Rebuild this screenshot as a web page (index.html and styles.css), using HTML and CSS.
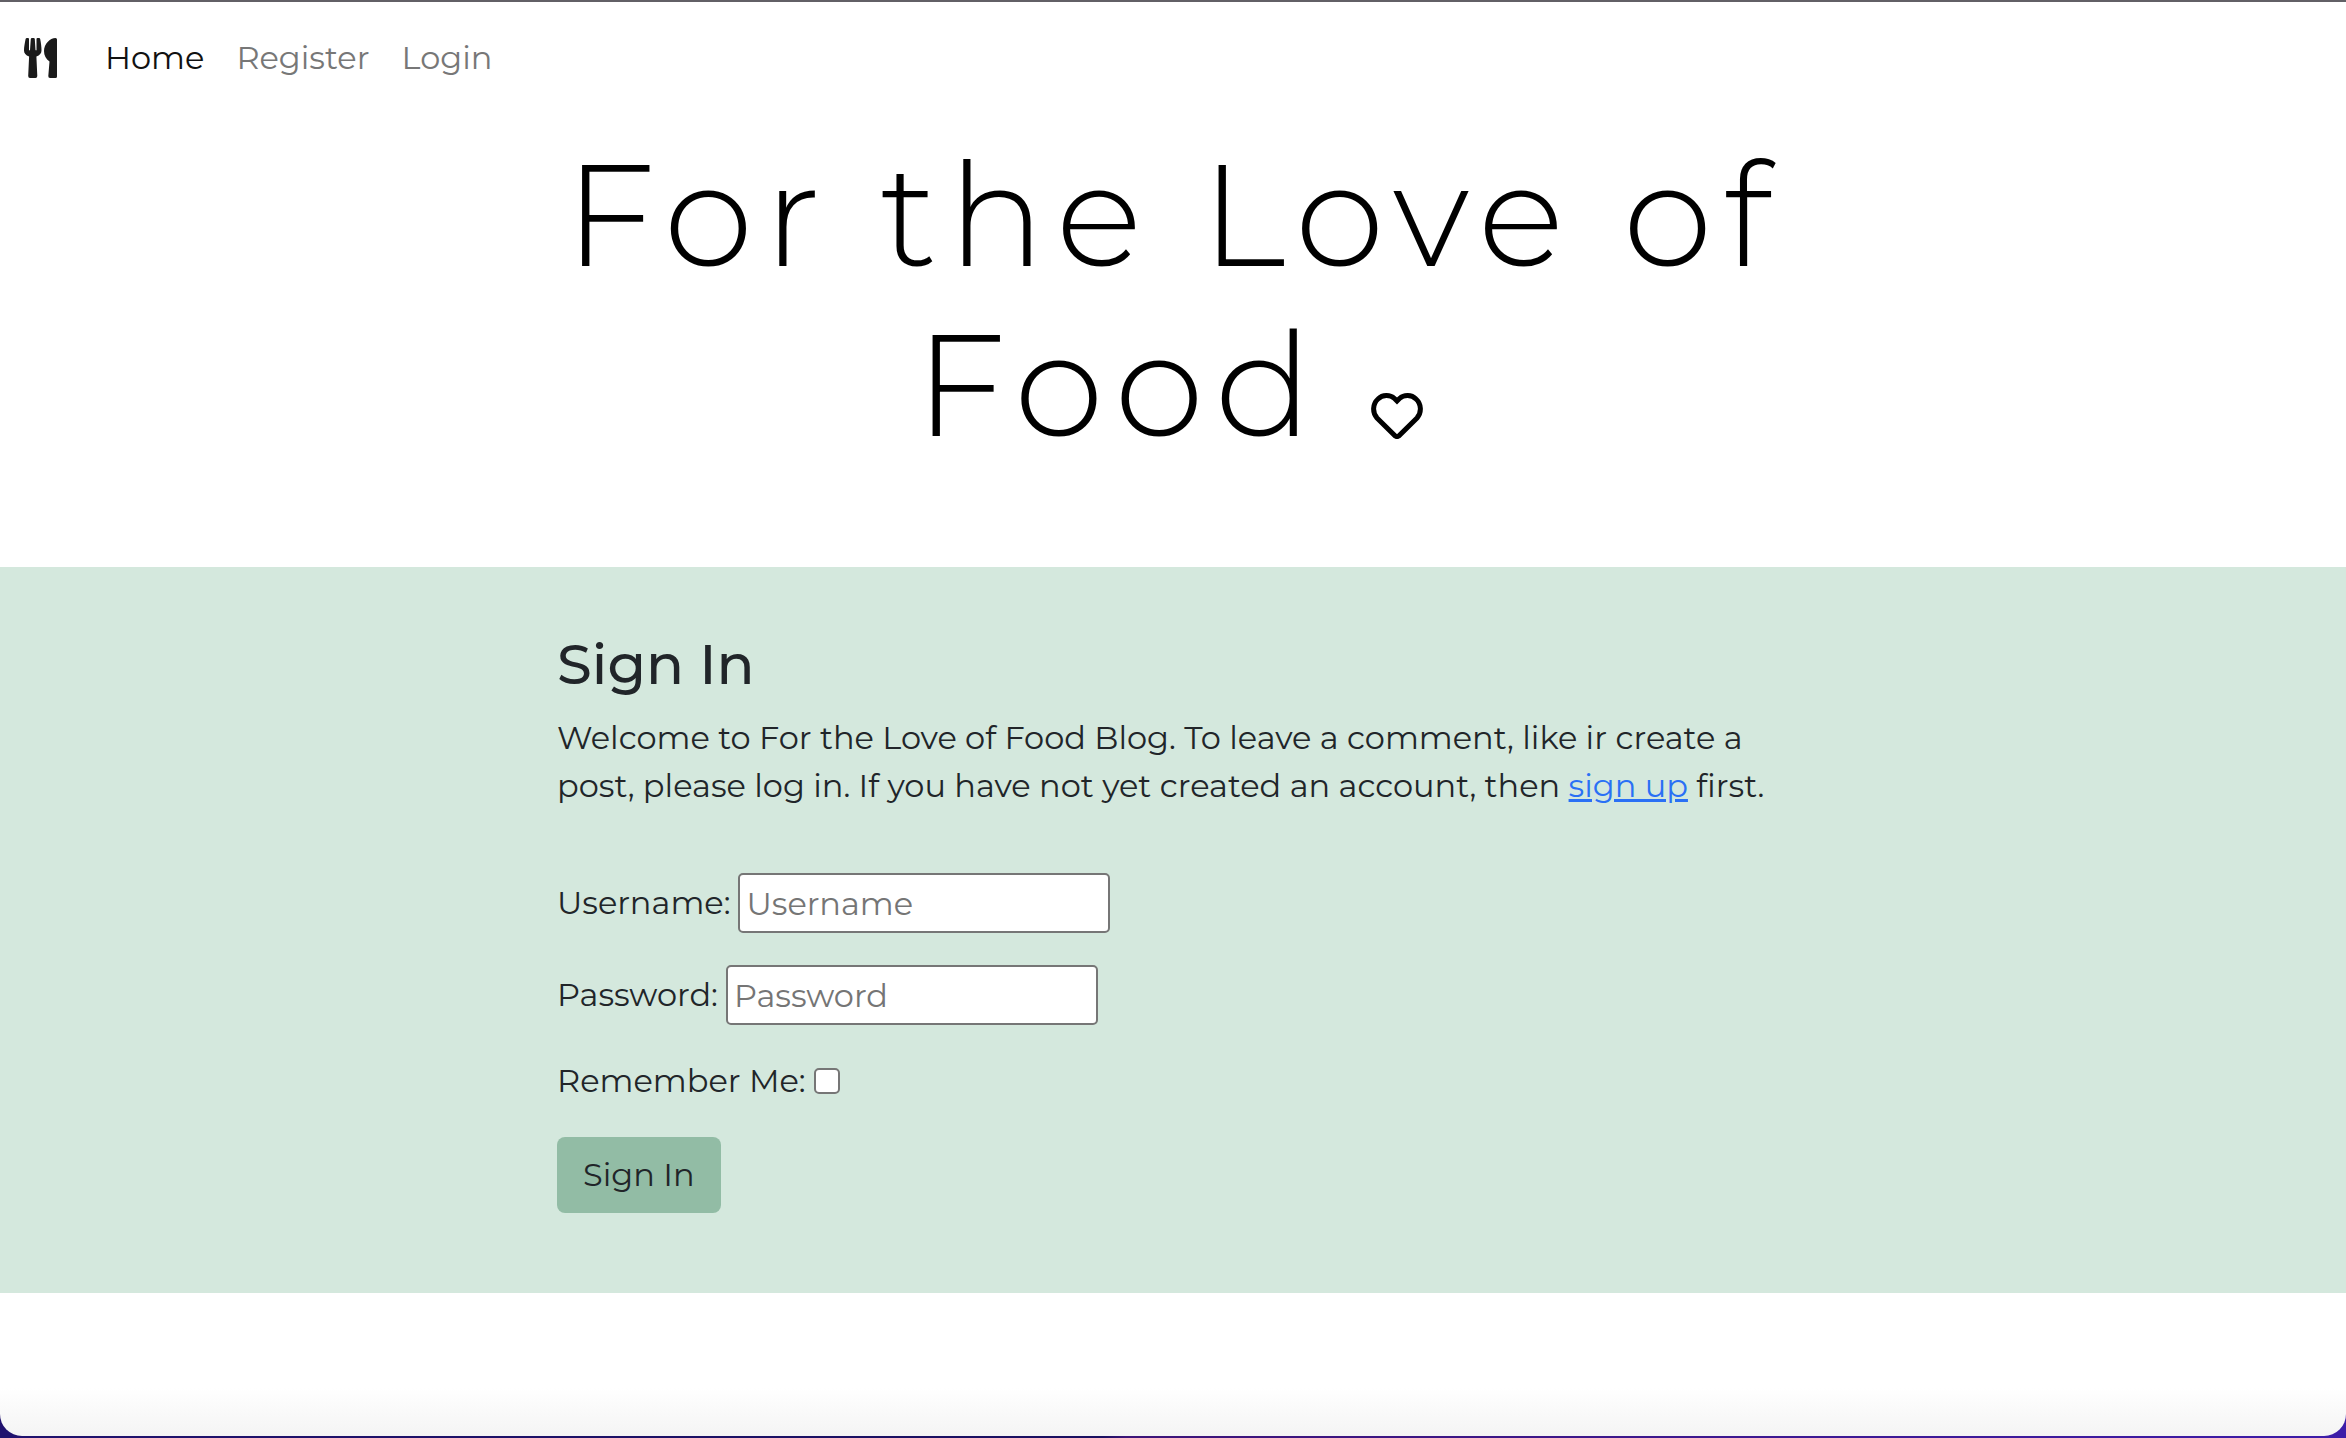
FILE: index.html
```html
<!DOCTYPE html>
<html lang="en">
<head>
<meta charset="utf-8">
<meta name="viewport" content="width=device-width, initial-scale=1">
<title>For the Love of Food</title>
<link rel="stylesheet" href="styles.css">
</head>
<body>
<div class="window">
  <nav class="navbar" aria-label="Main">
    <a class="brand" href="#" aria-label="For the Love of Food">
      <svg class="brand-icon" viewBox="0 0 33 40" aria-hidden="true">
        <path d="M1.600 1Q1.800 0 3 0H4Q5 0 5 1V12Q5.400 12.900 6 12L6.800 1Q6.900 0 8 0H9.600Q10.700 0 10.800 1L11.500 12Q12.100 12.900 12.500 12V1Q12.500 0 13.500 0H15Q16 0 16.200 1C17 5 17.500 9 17.500 12.500Q17.500 16.500 12.400 18.500L13.300 38Q13.300 40 11.500 40H6Q4.200 40 4.200 38L5.100 18.500Q0 16.500 0 12.500C0 9 .8 5 1.600 1Z"/>
        <path d="M31.500 0Q33 0 33 1.500V38.500Q33 40 31.500 40H26Q24.200 40 24.300 38L25.500 23.500C22 21 20 17.500 20 13C20 6 26 0 31.500 0Z"/>
      </svg>
    </a>
    <a class="nav-link active" href="#" aria-current="page">Home</a>
    <a class="nav-link" href="#">Register</a>
    <a class="nav-link" href="#">Login</a>
  </nav>

  <header class="masthead">
    <h1 class="title">For the Love of Food
      <svg class="heart" viewBox="0 0 52 46" aria-hidden="true"><path d="M26 8L23.500 5.500C19 1.500 11.500 1.500 7 6C1.500 11 1.200 19.500 6 25L24.300 43Q26 44.200 27.700 43L46 25C50.800 19.500 50.500 11 45 6C40.500 1.500 33 1.500 28.500 5.500Z"/></svg>
    </h1>
  </header>

  <main class="panel">
    <div class="content">
      <h2 class="heading">Sign In</h2>
      <p class="intro">Welcome to For the Love of Food Blog. To leave a comment, like ir create a post, please log in. If you have not yet created an account, then <a class="link" href="#">sign up</a> first.</p>
      <form class="form">
        <div class="field">
          <label for="username">Username:</label>
          <input class="text-input" id="username" type="text" placeholder="Username">
        </div>
        <div class="field">
          <label for="password">Password:</label>
          <input class="text-input" id="password" type="password" placeholder="Password">
        </div>
        <div class="field">
          <label for="remember">Remember Me:</label>
          <input class="check" id="remember" type="checkbox">
        </div>
        <button class="button" type="submit">Sign In</button>
      </form>
    </div>
  </main>
</div>
</body>
</html>
```
FILE: styles.css
```css
* {
  box-sizing: border-box;
}

body {
  margin: 0;
  min-height: 100vh;
  padding-bottom: 2px;
  display: flex;
  background: linear-gradient(90deg, #20126e, #1a1060 47%, #3c1478 48%, #3c1ca8);
  color: #212529;
  font-family: Montserrat, Inter, "Open Sans", sans-serif;
  font-size: 32px;
  line-height: 48px;
}

.window {
  flex: 1;
  min-width: 0;
  border-top: 2px solid #626066;
  border-radius: 0 0 22px 22px;
  background: linear-gradient(to top, #f4f4f4, #fff 48px);
}

.navbar {
  display: flex;
  align-items: center;
  gap: 32px;
  padding: 32px 24px;
}

.brand {
  display: flex;
  margin-right: 16px;
}

.brand-icon {
  width: 33px;
  height: 40px;
  fill: #1a1a1a;
}

.nav-link {
  color: #777;
  text-decoration: none;
}

.nav-link.active {
  color: #111;
}

.masthead {
  padding: 16px 24px 97px;
}

.title {
  max-width: 1320px;
  margin: 0 auto;
  color: #000;
  font-size: 144px;
  font-weight: 300;
  line-height: 170px;
  letter-spacing: 11px;
  text-align: center;
}

.heart {
  width: 52px;
  height: 46px;
  margin-right: 8px;
  vertical-align: -3px;
  fill: none;
  stroke: #000;
  stroke-width: 5;
}

.panel {
  padding: 63px 24px 80px;
  background: #d4e8dd;
}

.content {
  max-width: 1232px;
  margin: 0 auto;
}

.heading {
  margin: 0 0 16px;
  font-size: 56px;
  font-weight: 500;
  line-height: 68px;
}

.intro {
  margin: 0 0 63px;
}

.link {
  color: #2a70f5;
}

.form {
  display: flex;
  flex-direction: column;
  align-items: flex-start;
  gap: 32px;
}

.field {
  display: flex;
  align-items: center;
  gap: 8px;
}

.text-input {
  width: 372px;
  height: 60px;
  padding: 2px 6px;
  border: 2px solid #767676;
  border-radius: 5px;
  background: #fff;
  color: inherit;
  font: inherit;
}

.text-input::placeholder {
  color: #757575;
}

.check {
  appearance: none;
  width: 26px;
  height: 26px;
  margin: 0;
  border: 2px solid #767676;
  border-radius: 5px;
  background: #fff;
}

.check:checked {
  background: #2a70f5;
}

.button {
  padding: 14px 26px;
  border: 0;
  border-radius: 8px;
  background: #92bca5;
  color: inherit;
  font: inherit;
}
```
